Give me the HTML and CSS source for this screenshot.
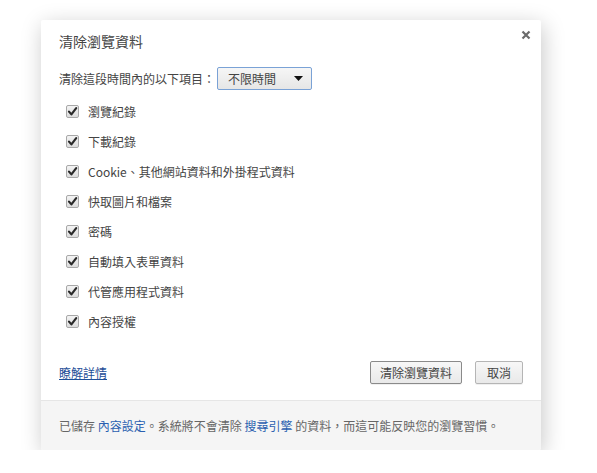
FILE: index.html
```html
<!DOCTYPE html>
<html lang="zh-Hant">
<head>
<meta charset="utf-8">
<title>清除瀏覽資料</title>
<link rel="stylesheet" href="styles.css">
</head>
<body>
<div class="dialog">
  <button class="close" aria-label="關閉">
    <svg width="10" height="10" viewBox="0 0 10 10"><path d="M1.5 1.5 L8.5 8.5 M8.5 1.5 L1.5 8.5" stroke="#6b6b6b" stroke-width="2.2" fill="none"/></svg>
  </button>
  <div class="body">
    <h1 class="title">清除瀏覽資料</h1>
    <div class="time-row">
      <span class="label">清除這段時間內的以下項目：</span>
      <div class="select">
        <span>不限時間</span>
        <svg class="arrow" width="9" height="5" viewBox="0 0 9 5"><path d="M0 0 H9 L4.5 5 Z" fill="#111"/></svg>
      </div>
    </div>
    <ul class="items">
      <li><span class="cb"><svg width="13" height="13" viewBox="0 0 13 13"><path d="M3 6.6 L5.4 9.4 L10.2 3.2" stroke="#2a2a2a" stroke-width="2.2" fill="none" stroke-linecap="round" stroke-linejoin="round"/></svg></span>瀏覽紀錄</li>
      <li><span class="cb"><svg width="13" height="13" viewBox="0 0 13 13"><path d="M3 6.6 L5.4 9.4 L10.2 3.2" stroke="#2a2a2a" stroke-width="2.2" fill="none" stroke-linecap="round" stroke-linejoin="round"/></svg></span>下載紀錄</li>
      <li><span class="cb"><svg width="13" height="13" viewBox="0 0 13 13"><path d="M3 6.6 L5.4 9.4 L10.2 3.2" stroke="#2a2a2a" stroke-width="2.2" fill="none" stroke-linecap="round" stroke-linejoin="round"/></svg></span>Cookie、其他網站資料和外掛程式資料</li>
      <li><span class="cb"><svg width="13" height="13" viewBox="0 0 13 13"><path d="M3 6.6 L5.4 9.4 L10.2 3.2" stroke="#2a2a2a" stroke-width="2.2" fill="none" stroke-linecap="round" stroke-linejoin="round"/></svg></span>快取圖片和檔案</li>
      <li><span class="cb"><svg width="13" height="13" viewBox="0 0 13 13"><path d="M3 6.6 L5.4 9.4 L10.2 3.2" stroke="#2a2a2a" stroke-width="2.2" fill="none" stroke-linecap="round" stroke-linejoin="round"/></svg></span>密碼</li>
      <li><span class="cb"><svg width="13" height="13" viewBox="0 0 13 13"><path d="M3 6.6 L5.4 9.4 L10.2 3.2" stroke="#2a2a2a" stroke-width="2.2" fill="none" stroke-linecap="round" stroke-linejoin="round"/></svg></span>自動填入表單資料</li>
      <li><span class="cb"><svg width="13" height="13" viewBox="0 0 13 13"><path d="M3 6.6 L5.4 9.4 L10.2 3.2" stroke="#2a2a2a" stroke-width="2.2" fill="none" stroke-linecap="round" stroke-linejoin="round"/></svg></span>代管應用程式資料</li>
      <li><span class="cb"><svg width="13" height="13" viewBox="0 0 13 13"><path d="M3 6.6 L5.4 9.4 L10.2 3.2" stroke="#2a2a2a" stroke-width="2.2" fill="none" stroke-linecap="round" stroke-linejoin="round"/></svg></span>內容授權</li>
    </ul>
    <div class="actions">
      <a class="learn" href="#">瞭解詳情</a>
      <div class="buttons">
        <button class="btn btn-default">清除瀏覽資料</button>
        <button class="btn btn-cancel">取消</button>
      </div>
    </div>
  </div>
  <div class="footer">已儲存 <a href="#">內容設定</a>。系統將不會清除 <a href="#">搜尋引擎</a> 的資料，而這可能反映您的瀏覽習慣。</div>
</div>
</body>
</html>
```

FILE: styles.css
```css
* { box-sizing: border-box; }
html, body { margin: 0; padding: 0; background: #ffffff; }
body {
  font-family: "Noto Sans CJK TC", "Noto Sans", sans-serif;
  font-size: 12px;
  color: #444;
  padding: 20px 0 0 41px;
}
.dialog {
  position: relative;
  width: 500px;
  height: 430px;
  background: #fff;
  border-radius: 2px;
  box-shadow: 2px 5px 22px rgba(0,0,0,0.22);
  display: flex;
  flex-direction: column;
  overflow: hidden;
}
.close {
  position: absolute;
  top: 9px;
  right: 9px;
  width: 12px;
  height: 12px;
  padding: 0;
  border: 0;
  background: transparent;
  display: flex;
  align-items: center;
  justify-content: center;
}
.body {
  flex: 1;
  padding: 11px 18px 0 18px;
  display: flex;
  flex-direction: column;
}
.title {
  margin: 0;
  font-size: 14px;
  font-weight: normal;
  line-height: 20px;
  color: #444;
}
.time-row {
  margin-top: 16px;
  height: 23px;
  display: flex;
  align-items: center;
}
.label { line-height: 23px; }
.select {
  margin-left: 2px;
  width: 95px;
  height: 23px;
  border: 1px solid #7aa2d6;
  border-radius: 2px;
  background: linear-gradient(#f6f6f6, #e6e6e6);
  display: flex;
  align-items: center;
  justify-content: space-between;
  padding: 0 8px 0 10px;
  color: #444;
}
.items {
  list-style: none;
  margin: 6px 0 0 0;
  padding: 0;
}
.items li {
  height: 30px;
  display: flex;
  align-items: center;
  padding-left: 7px;
}
.cb {
  width: 13px;
  height: 13px;
  border: 1px solid #a8a8a8;
  border-radius: 2px;
  background: linear-gradient(#f4f4f4, #dcdcdc);
  margin-right: 9px;
  display: flex;
  align-items: center;
  justify-content: center;
  position: relative;
}
.cb svg { position: absolute; left: -1px; top: -1px; }
.actions {
  margin-top: 25px;
  height: 23px;
  display: flex;
  align-items: center;
  justify-content: space-between;
}
.learn {
  color: #1f4f98;
  text-decoration: underline;
}
.buttons { display: flex; gap: 13px; }
.btn {
  font-family: inherit;
  font-size: 12px;
  color: #444;
  height: 23px;
  padding: 0;
  border: 1px solid #b5b5b5;
  border-radius: 2px;
  background: linear-gradient(#f7f7f7, #e9e9e9);
  box-shadow: 0 1px 0 rgba(0,0,0,0.06);
}
.btn-default { width: 92px; border-color: #8a8a8a; }
.btn-cancel { width: 48px; }
.footer {
  height: 50px;
  background: #f5f5f5;
  border-top: 1px solid #e6e6e6;
  padding: 0 18px;
  display: flex;
  align-items: center;
  color: #666;
  white-space: pre;
}
.footer a { color: #2a5fb0; text-decoration: none; }
```
